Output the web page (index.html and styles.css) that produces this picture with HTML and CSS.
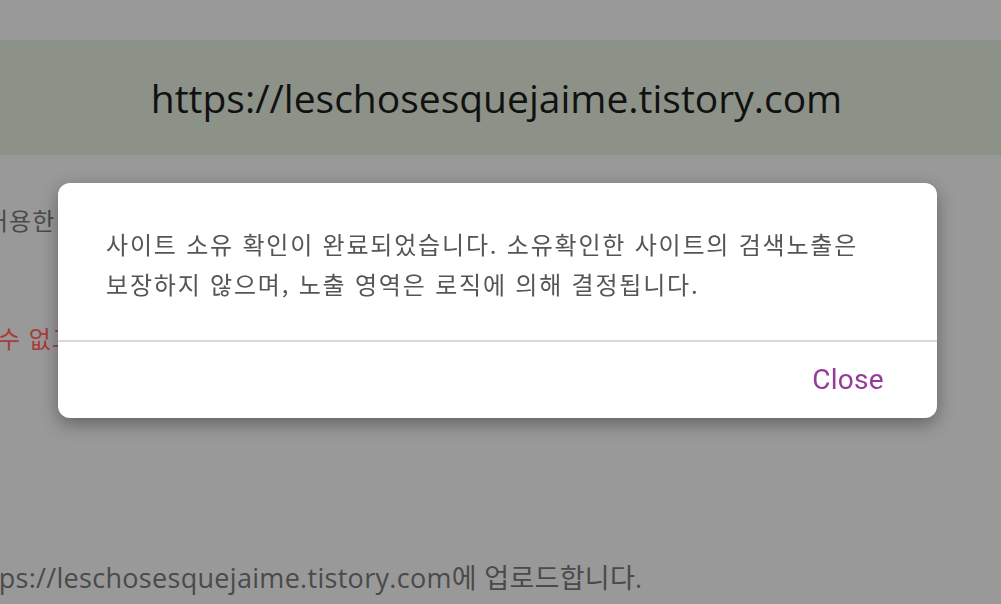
FILE: index.html
```html
<!DOCTYPE html>
<html lang="ko">
<head>
<meta charset="utf-8">
<title>사이트 소유 확인</title>
<link rel="stylesheet" href="styles.css">
</head>
<body>
<div class="page">
  <div class="band">https://leschosesquejaime.tistory.com</div>
  <p class="line line-a">허용한</p>
  <p class="line line-b">수 없고</p>
  <p class="line line-c">https://leschosesquejaime.tistory.com에 업로드합니다.</p>
</div>
<div class="overlay">
  <div class="dialog" role="dialog">
    <div class="dialog-body">사이트 소유 확인이 완료되었습니다. 소유확인한 사이트의 검색노출은<br>보장하지 않으며, 노출 영역은 로직에 의해 결정됩니다.</div>
    <div class="dialog-footer"><button class="close">Close</button></div>
  </div>
</div>
</body>
</html>
```

FILE: styles.css
```css
html, body {
  margin: 0;
  padding: 0;
  height: 100%;
  overflow: hidden;
}
body {
  background: #999999;
  font-family: "Open Sans", "Noto Sans CJK KR", sans-serif;
}
.page {
  padding-top: 40px;
}
.band {
  height: 115px;
  background: #8d9288;
  color: #111;
  font-size: 39px;
  display: flex;
  align-items: center;
  justify-content: center;
  padding-right: 8px;
  box-sizing: border-box;
}
.line {
  margin: 0;
  font-size: 24px;
  line-height: 32px;
  white-space: nowrap;
  color: #4a4a4a;
  font-family: "Noto Sans CJK KR", sans-serif;
  letter-spacing: 1px;
}
.line-a {
  margin-top: 49px;
  margin-left: -14px;
}
.line-b {
  margin-top: 86px;
  margin-left: -2px;
  color: #a83c3c;
}
.line-c {
  margin-top: 208px;
  margin-left: -38px;
  font-size: 27px;
  letter-spacing: 0.3px;
  font-family: "Open Sans", "Noto Sans CJK KR", sans-serif;
}
.overlay {
  position: fixed;
  inset: 0;
  display: flex;
  align-items: center;
  justify-content: center;
  padding-right: 6px;
  padding-bottom: 4px;
}
.dialog {
  width: 879px;
  background: #fff;
  border-radius: 12px;
  box-shadow: 0 6px 18px rgba(0, 0, 0, 0.35);
  overflow: hidden;
}
.dialog-body {
  padding: 41px 40px 36px 48px;
  font-family: "Noto Sans CJK KR", sans-serif;
  font-size: 24px;
  letter-spacing: 1.8px;
  line-height: 40px;
  color: #555555;
  white-space: nowrap;
}
.dialog-footer {
  border-top: 2px solid #d9d9d9;
  height: 76px;
  display: flex;
  align-items: center;
  justify-content: flex-end;
  padding-right: 53px;
}
.close {
  background: none;
  border: 0;
  padding: 0;
  font-family: Roboto, sans-serif;
  font-size: 28px;
  letter-spacing: 0.3px;
  color: #98399c;
  cursor: pointer;
}
```
